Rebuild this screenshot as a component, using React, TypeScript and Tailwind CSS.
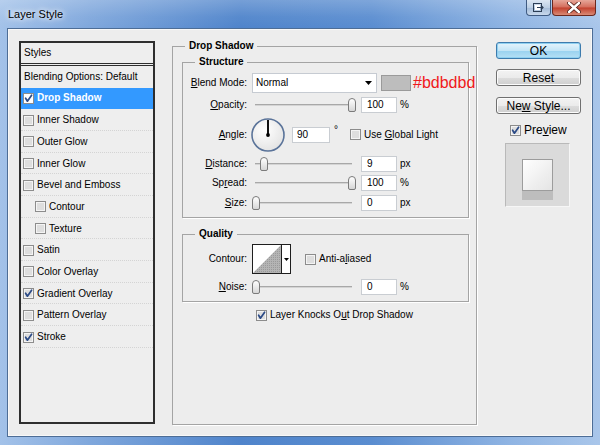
import React from "react";

function Check({ checked = false, white = false }: { checked?: boolean; white?: boolean }) {
  return (
    <svg width="11" height="11" viewBox="0 0 11 11" className="block shrink-0">
      <rect x="0.5" y="0.5" width="10" height="10" fill={white ? "#ffffff" : "#f4f4f4"} stroke="#8c8c8c" />
      <rect x="2" y="2" width="7" height="7" fill={white ? "#ffffff" : "#dedede"} />
      {checked && (
        <path d="M2.6 5.2 L4.4 8.2 L8.6 2.2" stroke="#2b4a86" strokeWidth="1.7" fill="none" strokeLinecap="round" strokeLinejoin="round" />
      )}
    </svg>
  );
}

function Label({ children }: { children: React.ReactNode }) {
  return <div className="w-[64px] shrink-0 text-right leading-[12px] whitespace-nowrap">{children}</div>;
}

function Field({ v, w = "w-[36px]", pad = "pl-[5px]" }: { v: string; w?: string; pad?: string }) {
  return (
    <div className={"h-[16px] shrink-0 bg-white border border-[#c9cdd2] flex items-center leading-none " + w + " " + pad}>
      {v}
    </div>
  );
}

function Slider({ thumb }: { thumb: string }) {
  return (
    <div className="relative w-[106px] h-[16px] shrink-0">
      <div className="absolute left-[4px] w-[97px] top-[7px] h-[2px] bg-[#d4d4d4] border-t border-[#a8a8a8]" />
      <div
        className={
          "absolute top-[1px] w-[8px] h-[14px] rounded-t-[4px] rounded-b-[2px] border border-[#7b7b7b] bg-[linear-gradient(180deg,#ffffff,#d6d6d6)] " +
          thumb
        }
      />
    </div>
  );
}

function Dial() {
  return (
    <svg width="34" height="34" viewBox="0 0 34 34" className="block shrink-0">
      <defs>
        <radialGradient id="dialg" cx="40%" cy="35%" r="70%">
          <stop offset="0%" stopColor="#ffffff" />
          <stop offset="100%" stopColor="#e2e2e2" />
        </radialGradient>
      </defs>
      <circle cx="17" cy="17" r="16" fill="url(#dialg)" stroke="#5a7399" strokeWidth="1.6" />
      <line x1="17" y1="17" x2="17" y2="2" stroke="#111" strokeWidth="2" />
      <circle cx="17" cy="17" r="1.9" fill="#000" />
    </svg>
  );
}

function ContourBox() {
  return (
    <div className="w-[39px] h-[30px] shrink-0 border border-[#1e1e1e] bg-white flex">
      <svg width="28" height="28" viewBox="0 0 28 28" className="block">
        <defs>
          <pattern id="dots" width="2" height="2" patternUnits="userSpaceOnUse">
            <rect width="2" height="2" fill="#b4b4b4" />
            <rect width="1" height="1" fill="#9a9a9a" />
          </pattern>
        </defs>
        <rect width="28" height="28" fill="#ffffff" />
        <polygon points="0,28 28,0 28,28" fill="url(#dots)" />
      </svg>
      <div className="w-[1px] bg-[#1e1e1e]" />
      <div className="flex-1 flex items-center justify-center">
        <svg width="5" height="3" viewBox="0 0 5 3" className="block">
          <polygon points="0,0 5,0 2.5,3" fill="#000" />
        </svg>
      </div>
    </div>
  );
}

const styleRows: { t: React.ReactNode; c?: boolean; sel?: boolean; sub?: boolean }[] = [
  { t: "Drop Shadow", c: true, sel: true },
  { t: "Inner Shadow" },
  { t: "Outer Glow" },
  { t: "Inner Glow" },
  { t: "Bevel and Emboss" },
  { t: "Contour", sub: true },
  { t: "Texture", sub: true },
  { t: "Satin" },
  { t: "Color Overlay" },
  { t: "Gradient Overlay", c: true },
  { t: "Pattern Overlay" },
  { t: "Stroke", c: true },
];

function Button({ children, primary = false, cls = "" }: { children: React.ReactNode; primary?: boolean; cls?: string }) {
  return (
    <div
      className={
        "w-[85px] h-[17px] rounded-[3px] border flex items-center justify-center text-[12px] leading-none " +
        (primary
          ? "border-[#3d7bad] bg-[linear-gradient(180deg,#e5f4fc_0%,#c4e5f6_50%,#98d1ef_51%,#b6e0f5_100%)] shadow-[inset_0_0_0_1px_#8fd0f0]"
          : "border-[#707070] bg-[linear-gradient(180deg,#f3f3f3_0%,#ebebeb_50%,#dddddd_51%,#cfcfcf_100%)] shadow-[inset_0_0_0_1px_#fcfcfc]") +
        " " +
        cls
      }
    >
      {children}
    </div>
  );
}

export default function App() {
  return (
    <div className="w-[600px] h-[445px] flex flex-col overflow-hidden font-['Liberation_Sans',Arial,sans-serif] text-[10px] text-black bg-[linear-gradient(90deg,#a3c2e9_0%,#7fa7dc_15%,#4f84cb_40%,#5a8dd0_62%,#8fb4e3_85%,#a9c6ea_100%)]">
      {/* title bar */}
      <div className="h-[28px] shrink-0 flex justify-between bg-[linear-gradient(180deg,rgba(255,255,255,0.22),rgba(255,255,255,0.05)_60%,rgba(255,255,255,0)_100%)]">
        <div className="self-center pl-[8px] pt-[1px] text-[11px] leading-none [text-shadow:0_0_5px_#ffffff,0_0_8px_#ffffff]">Layer Style</div>
        <div className="self-start flex gap-[1px] pr-[4px]">
          <div className="w-[25px] h-[16px] rounded-b-[4px] border border-t-0 border-[#3f5b82] bg-[linear-gradient(180deg,#dbe6f2_0%,#bccfe4_50%,#a3bbd8_51%,#c9d9ec_100%)] flex items-center justify-center">
            <svg width="11" height="9" viewBox="0 0 11 9" className="block">
              <rect x="0.5" y="0.5" width="8" height="8" fill="none" stroke="#2c3e55" strokeWidth="1" />
              <rect x="2" y="2" width="5" height="5" fill="#ffffff" />
              <path d="M4 4.5 H10 M8 2.5 L10 4.5 L8 6.5" stroke="#2c3e55" strokeWidth="1.2" fill="none" />
            </svg>
          </div>
          <div className="w-[44px] h-[16px] rounded-b-[4px] border border-t-0 border-[#6b281e] bg-[linear-gradient(180deg,#e6a699_0%,#d46d5c_48%,#c2402d_52%,#d98a76_100%)] flex items-center justify-center">
            <svg width="14" height="11" viewBox="0 0 14 11" className="block">
              <path d="M2 1 L12 10 M12 1 L2 10" stroke="#4a1a14" strokeWidth="4" strokeLinecap="round" />
              <path d="M2 1 L12 10 M12 1 L2 10" stroke="#ffffff" strokeWidth="2.4" strokeLinecap="round" />
            </svg>
          </div>
        </div>
      </div>

      {/* content */}
      <div className="mx-[7px] h-[409px] shrink-0 bg-[#ededed] border border-[#4d6d96] shadow-[inset_0_0_0_1px_#f8f8f8] flex pl-[11px] pt-[12px]">
        {/* styles list */}
        <div className="w-[136px] h-[383px] shrink-0 border-2 border-[#2e2e2e] bg-[#eeeeee]">
          <div className="h-[23px] border-b-[3px] border-double border-[#2e2e2e] pl-[3px] flex items-center leading-none">Styles</div>
          <div className="h-[21.6px] pl-[3px] flex items-center leading-none">Blending Options: Default</div>
          {styleRows.map((r, i) => (
            <div
              key={i}
              className={
                "h-[21.7px] flex items-center leading-none " +
                (r.sub ? "pl-[14px] " : "pl-[2px] ") +
                (r.sel ? "bg-[#3399ff] text-white font-bold" : "border-b border-dotted border-[#d4d4d4] pt-[1px]")
              }
            >
              <Check checked={r.c} white={r.sel} />
              <span className="ml-[3px] whitespace-nowrap">{r.t}</span>
            </div>
          ))}
        </div>

        {/* main */}
        <fieldset className="ml-[17px] mt-[-1px] w-[305px] h-[385px] min-w-0 shrink-0 border border-[#a4a4a4] shadow-[1px_1px_0_#ffffff] pl-[9px] pr-[7px]">
          <legend className="ml-[3px] px-[4px] font-bold leading-[12px]">Drop Shadow</legend>

          <fieldset className="mt-[4px] min-w-0 border border-[#a4a4a4] shadow-[1px_1px_0_#ffffff] pb-[6px]">
            <legend className="ml-[12px] px-[4px] font-bold leading-[12px]">Structure</legend>

            <div className="mt-[5px] h-[20px] flex items-center">
              <Label>
                <u>B</u>lend Mode:
              </Label>
              <div className="ml-[5px] w-[125px] h-[20px] shrink-0 bg-white border border-[#c6cbd2] flex items-center justify-between pl-[3px] pr-[4px] leading-none">
                <span>Normal</span>
                <svg width="7" height="4" viewBox="0 0 7 4" className="block">
                  <polygon points="0,0 7,0 3.5,4" fill="#000" />
                </svg>
              </div>
              <div className="ml-[4px] w-[30px] h-[16px] shrink-0 bg-[#bdbdbd] border border-[#9a9a9a]" />
              <div className="ml-[2px] text-[16px] leading-none text-[#f0191b] whitespace-nowrap">#bdbdbd</div>
            </div>

            <div className="mt-[4px] h-[16px] flex items-center">
              <Label>
                <u>O</u>pacity:
              </Label>
              <div className="ml-[4px]">
                <Slider thumb="left-[97px]" />
              </div>
              <div className="ml-[4px]">
                <Field v="100" />
              </div>
              <div className="ml-[3px] leading-none">%</div>
            </div>

            <div className="mt-[3px] h-[37px] flex items-center">
              <Label>
                <u>A</u>ngle:
              </Label>
              <div className="ml-[4px]">
                <Dial />
              </div>
              <div className="ml-[7px]">
                <Field v="90" w="w-[38px]" pad="pl-[4px]" />
              </div>
              <div className="ml-[4px] self-start mt-[9px] leading-none">°</div>
              <div className="ml-[12px]">
                <Check />
              </div>
              <div className="ml-[3px] leading-none whitespace-nowrap">
                Use <u>G</u>lobal Light
              </div>
            </div>

            <div className="mt-[3px] h-[16px] flex items-center">
              <Label>
                <u>D</u>istance:
              </Label>
              <div className="ml-[4px]">
                <Slider thumb="left-[9px]" />
              </div>
              <div className="ml-[4px]">
                <Field v="9" />
              </div>
              <div className="ml-[3px] leading-none">px</div>
            </div>

            <div className="mt-[3px] h-[16px] flex items-center">
              <Label>
                Sp<u>r</u>ead:
              </Label>
              <div className="ml-[4px]">
                <Slider thumb="left-[97px]" />
              </div>
              <div className="ml-[4px]">
                <Field v="100" />
              </div>
              <div className="ml-[3px] leading-none">%</div>
            </div>

            <div className="mt-[4px] h-[16px] flex items-center">
              <Label>
                <u>S</u>ize:
              </Label>
              <div className="ml-[4px]">
                <Slider thumb="left-[1px]" />
              </div>
              <div className="ml-[4px]">
                <Field v="0" />
              </div>
              <div className="ml-[3px] leading-none">px</div>
            </div>
          </fieldset>

          <fieldset className="mt-[10px] min-w-0 border border-[#a4a4a4] shadow-[1px_1px_0_#ffffff] pb-[6px]">
            <legend className="ml-[12px] px-[4px] font-bold leading-[12px]">Quality</legend>

            <div className="mt-[4px] h-[30px] flex items-center">
              <Label>Contour:</Label>
              <div className="ml-[5px]">
                <ContourBox />
              </div>
              <div className="ml-[14px]">
                <Check />
              </div>
              <div className="ml-[3px] leading-none whitespace-nowrap">
                Anti-a<u>l</u>iased
              </div>
            </div>

            <div className="mt-[5px] h-[16px] flex items-center">
              <Label>
                <u>N</u>oise:
              </Label>
              <div className="ml-[4px]">
                <Slider thumb="left-[1px]" />
              </div>
              <div className="ml-[4px]">
                <Field v="0" />
              </div>
              <div className="ml-[3px] leading-none">%</div>
            </div>
          </fieldset>

          <div className="mt-[7px] ml-[74px] h-[12px] flex items-center">
            <Check checked />
            <div className="ml-[3px] leading-none whitespace-nowrap">
              Layer Knocks O<u>u</u>t Drop Shadow
            </div>
          </div>
        </fieldset>

        {/* right column */}
        <div className="ml-[19px] mt-[1px] w-[85px] shrink-0 flex flex-col">
          <Button primary>OK</Button>
          <Button cls="mt-[10px]">Reset</Button>
          <Button cls="mt-[11px]">
            <span>
              Ne<u>w</u> Style...
            </span>
          </Button>
          <div className="mt-[10px] ml-[14px] h-[12px] flex items-center">
            <Check checked />
            <div className="ml-[3px] text-[12px] leading-none">
              Pre<u>v</u>iew
            </div>
          </div>
          <div className="mt-[7px] ml-[9px] w-[65px] h-[64px] border border-t-[#b9b9b9] border-l-[#b9b9b9] border-r-[#f6f6f6] border-b-[#f6f6f6] bg-[#dadada] pt-[15px] pl-[16px]">
            <div className="w-[31px] h-[32px] border border-[#9c9c9c] bg-[linear-gradient(135deg,#ffffff,#e4e4e4)] shadow-[0_9px_0_0_#bdbdbd]" />
          </div>
        </div>
      </div>
    </div>
  );
}
